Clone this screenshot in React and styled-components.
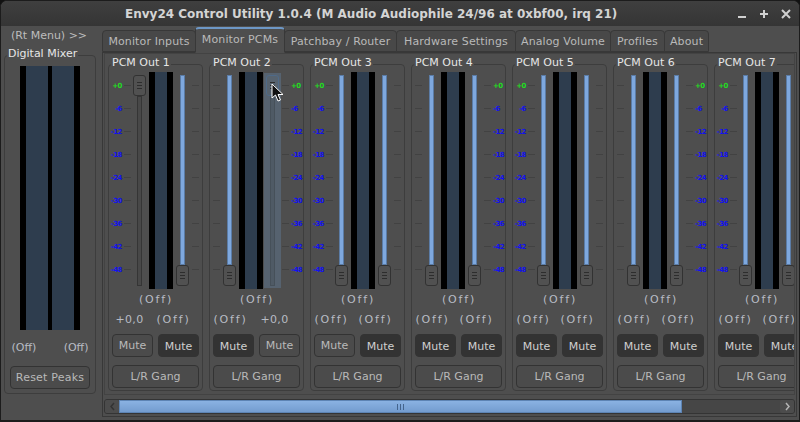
import styled, { createGlobalStyle } from "styled-components";

const Global = createGlobalStyle`
  html, body { margin: 0; padding: 0; background: #111; }
  body { width: 800px; height: 422px; overflow: hidden; font-family: "DejaVu Sans", sans-serif; }
`;

const Window = styled.div`
  position: relative;
  width: 800px;
  height: 422px;
  box-sizing: border-box;
  background: #4e4e4e;
  border: 1px solid #1c1c1c;
  border-bottom-width: 2px;
  border-radius: 7px 7px 0 0;
  overflow: hidden;
  color: #c4c4c4;
  font-size: 11px;
  display: flex;
  flex-direction: column;
`;

const TitleBar = styled.div`
  height: 25px;
  flex: none;
  background: linear-gradient(#3f3f3f, #353535);
  display: flex;
  align-items: center;
  padding: 0 7px 0 124px;
`;
const Title = styled.div`
  font-size: 12px;
  font-weight: 700;
  color: #d4d4d4;
  white-space: nowrap;
`;
const WinButtons = styled.div`
  display: flex;
  gap: 10px;
  margin-left: auto;
  svg { display: block; }
`;

const Body = styled.div`
  flex: 1;
  min-height: 0;
  display: flex;
  gap: 6px;
  padding: 2px 2px 0 3px;
`;

const Side = styled.div`
  width: 92px;
  flex: none;
  display: flex;
  flex-direction: column;
`;
const RtMenu = styled.div`
  text-align: center;
  height: 14px;
  line-height: 14px;
  margin-top: 1px;
  padding-right: 2px;
  color: #bdbdbd;
`;
const SideFrame = styled.div`
  position: relative;
  margin-top: 12px;
  height: 339px;
  box-sizing: border-box;
  border: 1px solid #3d3d3d;
  border-radius: 4px;
  display: flex;
  flex-direction: column;
  align-items: center;
  padding-top: 10px;
`;
const FrameLabel = styled.span`
  position: absolute;
  left: 2px;
  top: -9px;
  padding: 0 1px;
  background: #4e4e4e;
  color: #e6e6e6;
  line-height: 14px;
  white-space: nowrap;
`;
const BigMeter = styled.div`
  width: 60px;
  height: 264px;
  flex: none;
  background: #000;
  display: flex;
  justify-content: center;
  gap: 4px;
`;
const MeterBar = styled.div`
  width: ${(p) => p.$w}px;
  height: 100%;
  background: #2e3d4e;
`;
const PeakRow = styled.div`
  width: 77px;
  display: flex;
  justify-content: space-between;
  margin-top: 11px;
  line-height: 14px;
  color: #b8bcc4;
`;
const Button = styled.div`
  box-sizing: border-box;
  width: ${(p) => p.$w}px;
  height: 23px;
  flex: none;
  display: flex;
  align-items: center;
  justify-content: center;
  border: 1px solid #333333;
  border-radius: 4px;
  background: ${(p) => (p.$on ? "#333333" : "#4b4b4b")};
  color: ${(p) => (p.$on ? "#cfcfcf" : "#b9b9b9")};
  padding-top: ${(p) => (p.$on ? 2 : 0)}px;
`;
const ResetButton = styled(Button)`
  margin-top: 11px;
  letter-spacing: 0.2px;
`;

const Main = styled.div`
  flex: 1;
  min-width: 0;
  display: flex;
  flex-direction: column;
`;
const Tabs = styled.div`
  height: 24px;
  flex: none;
  padding-left: 1px;
  display: flex;
  align-items: flex-end;
`;
const Tab = styled.div`
  box-sizing: border-box;
  width: ${(p) => p.$w}px;
  flex: none;
  height: ${(p) => (p.$active ? 26 : 22)}px;
  margin-bottom: ${(p) => (p.$active ? -1 : 0)}px;
  position: relative;
  z-index: ${(p) => (p.$active ? 2 : 0)};
  display: flex;
  align-items: center;
  justify-content: center;
  padding-bottom: ${(p) => (p.$active ? 3 : 0)}px;
  border: 1px solid #383838;
  border-top-color: ${(p) => (p.$active ? "#6d97c6" : "#383838")};
  border-top-width: ${(p) => (p.$active ? 2 : 1)}px;
  border-bottom-color: ${(p) => (p.$active ? "#4e4e4e" : "#383838")};
  border-radius: 4px 4px 0 0;
  margin-left: -1px;
  background: ${(p) => (p.$active ? "#4e4e4e" : "#484848")};
  color: #b9b9b9;
  white-space: nowrap;
  letter-spacing: 0.12px;
`;
const Panel = styled.div`
  box-sizing: border-box;
  height: 365px;
  flex: none;
  border: 1px solid #383838;
  padding: 0 1px 2px 1px;
  display: flex;
  flex-direction: column;
`;
const Viewport = styled.div`
  box-sizing: border-box;
  height: 342px;
  flex: none;
  border: 1px solid #434343;
  padding: 10px 0 0 3px;
  overflow: hidden;
  display: flex;
  gap: 6px;
`;

const Strip = styled.div`
  position: relative;
  box-sizing: border-box;
  width: 95px;
  height: 327px;
  flex: none;
  border: 1px solid #3d3d3d;
  border-radius: 4px;
  padding: 7px 3px 0 3px;
  display: flex;
  flex-direction: column;
  align-items: center;
`;
const Controls = styled.div`
  width: 100%;
  height: 218px;
  flex: none;
  display: flex;
`;
const Scale = styled.div`
  width: 19px;
  flex: none;
  padding-top: 2px;
  display: flex;
  flex-direction: column;
`;
const ScaleRow = styled.div`
  height: 23px;
  flex: none;
  display: flex;
  align-items: center;
  justify-content: ${(p) => (p.$flip ? "flex-start" : "flex-end")};
  padding-left: ${(p) => (p.$flip ? 1 : 0)}px;
  gap: 2px;
  font-size: 7px;
  font-weight: 700;
  letter-spacing: -0.5px;
  color: ${(p) => (p.$top ? "#22dd22" : "#1212ee")};
`;
const ScaleText = styled.span`
  line-height: 10px;
`;
const Tick = styled.i`
  width: 7px;
  height: 1px;
  flex: none;
  background: #424242;
`;
const TickCol = styled.div`
  width: 8px;
  flex: none;
  padding-top: 2px;
  display: flex;
  flex-direction: column;
  align-items: ${(p) => (p.$flip ? "flex-end" : "flex-start")};
`;
const TickRow = styled.div`
  height: 23px;
  flex: none;
  display: flex;
  align-items: center;
`;
const FaderCol = styled.div`
  position: relative;
  width: 17px;
  height: 215px;
  margin-top: 1px;
  flex: none;
  background: ${(p) => (p.$hover ? "#56626f" : "transparent")};
`;
const Track = styled.div`
  position: absolute;
  left: 6px;
  width: 5px;
  top: 23px;
  bottom: 2px;
  box-sizing: border-box;
  border: 1px solid ${(p) => (p.$hover ? "#465059" : "#353535")};
  background: ${(p) => (p.$hover ? "#4f5a65" : "#484848")};
`;
const Fill = styled.div`
  position: absolute;
  left: 6px;
  width: 5px;
  top: 2px;
  bottom: 23px;
  box-sizing: border-box;
  border: 1px solid #5b7ca6;
  background: #7ea8de;
`;
const Thumb = styled.div`
  position: absolute;
  left: 2px;
  width: 13px;
  height: 21px;
  box-sizing: border-box;
  ${(p) => (p.$up ? "top: 2px;" : "bottom: 2px;")}
  border: 1px solid ${(p) => (p.$hover ? "#4f6a88" : "#323232")};
  border-radius: 3px;
  background: ${(p) => (p.$hover ? "#57636f" : "#515151")};
  display: flex;
  flex-direction: column;
  align-items: center;
  justify-content: center;
  gap: 2px;
  i {
    display: block;
    width: 5px;
    height: 1px;
    background: #2d2d2d;
  }
`;
const StripMeter = styled.div`
  width: 24px;
  height: 217px;
  flex: none;
  margin: 0 1px;
  display: flex;
  justify-content: center;
  background: #000;
`;
const Gain = styled.div`
  height: 20px;
  line-height: 20px;
  padding-left: 1px;
  letter-spacing: 1.800px;
  color: #b8bcc4;
`;
const ValueRow = styled.div`
  width: 87px;
  height: 20px;
  display: flex;
  gap: 9px;
  line-height: 20px;
  color: #b8bcc4;
`;
const Value = styled.div`
  width: 35px;
  text-align: center;
  flex: none;
  white-space: nowrap;
  display: flex;
  justify-content: center;
  letter-spacing: ${(p) => (p.$num ? 0.3 : 1.8)}px;
`;
const MuteRow = styled.div`
  width: 87px;
  display: flex;
  justify-content: space-between;
  margin-top: 4px;
`;
const GangButton = styled(Button)`
  margin-top: 8px;
`;

const ScrollBar = styled.div`
  box-sizing: border-box;
  height: 15px;
  flex: none;
  margin-top: 4px;
  border: 1px solid #343434;
  border-radius: 3px;
  background: #464646;
  display: flex;
  align-items: stretch;
`;
const ScrollEnd = styled.div`
  width: 14px;
  flex: none;
  display: flex;
  align-items: center;
  justify-content: center;
  background: #4c4c4c;
  border-radius: 2px;
  margin-left: ${(p) => (p.$right ? "auto" : 0)};
  svg { display: block; }
`;
const ScrollThumb = styled.div`
  width: 563px;
  flex: none;
  box-sizing: border-box;
  border: 1px solid #5d84b4;
  background: linear-gradient(#8ab2e2, #739ccf);
  display: flex;
  align-items: center;
  justify-content: center;
  gap: 2px;
  i {
    display: block;
    width: 1px;
    height: 6px;
    background: #44648c;
  }
`;
const Cursor = styled.svg`
  position: absolute;
  left: 270px;
  top: 82px;
`;

const labels = ["+0", "-6", "-12", "-18", "-24", "-30", "-36", "-42", "-48"];

const strips = [
  { name: "PCM Out 1", a: "+0,0", b: "(Off)", upA: true, muteA: false, muteB: true },
  { name: "PCM Out 2", a: "(Off)", b: "+0,0", upB: true, muteA: true, muteB: false },
  { name: "PCM Out 3", a: "(Off)", b: "(Off)", muteA: false, muteB: true },
  { name: "PCM Out 4", a: "(Off)", b: "(Off)", muteA: true, muteB: true },
  { name: "PCM Out 5", a: "(Off)", b: "(Off)", muteA: true, muteB: true },
  { name: "PCM Out 6", a: "(Off)", b: "(Off)", muteA: true, muteB: true },
  { name: "PCM Out 7", a: "(Off)", b: "(Off)", muteA: true, muteB: true },
];

const tabs = [
  { name: "Monitor Inputs", w: 94 },
  { name: "Monitor PCMs", w: 90 },
  { name: "Patchbay / Router", w: 113 },
  { name: "Hardware Settings", w: 120 },
  { name: "Analog Volume", w: 96 },
  { name: "Profiles", w: 55 },
  { name: "About", w: 45 },
];

const Fader = ({ up, hover }) => (
  <FaderCol $hover={hover}>
    {up ? <Track $hover={hover} /> : <Fill />}
    <Thumb $up={up} $hover={hover}>
      <i />
      <i />
      <i />
    </Thumb>
  </FaderCol>
);

const Ticks = ({ flip }) => (
  <TickCol $flip={flip}>
    {labels.map((l) => (
      <TickRow key={l}>
        <Tick />
      </TickRow>
    ))}
  </TickCol>
);

const LabelScale = ({ flip }) => (
  <Scale>
    {labels.map((l, i) => (
      <ScaleRow key={l} $top={i === 0} $flip={flip}>
        {flip ? <Tick /> : null}
        <ScaleText>{l}</ScaleText>
        {flip ? null : <Tick />}
      </ScaleRow>
    ))}
  </Scale>
);

const StripView = ({ data, even }) => (
  <Strip>
    <FrameLabel>{data.name}</FrameLabel>
    <Controls>
      {even ? <Ticks /> : <LabelScale />}
      <Fader up={data.upA} />
      <StripMeter>
        <MeterBar $w={12} />
      </StripMeter>
      <Fader up={data.upB} hover={data.upB} />
      {even ? <LabelScale flip /> : <Ticks flip />}
    </Controls>
    <Gain>(Off)</Gain>
    <ValueRow>
      <Value $num={data.a !== "(Off)"}>{data.a}</Value>
      <Value $num={data.b !== "(Off)"}>{data.b}</Value>
    </ValueRow>
    <MuteRow>
      <Button $w={41} $on={data.muteA}>Mute</Button>
      <Button $w={41} $on={data.muteB}>Mute</Button>
    </MuteRow>
    <GangButton $w={87}>L/R Gang</GangButton>
  </Strip>
);

export default function App() {
  return (
    <Window>
      <Global />
      <TitleBar>
        <Title>Envy24 Control Utility 1.0.4 (M Audio Audiophile 24/96 at 0xbf00, irq 21)</Title>
        <WinButtons>
          <svg width="12" height="12" viewBox="0 0 12 12">
            <path d="M2 9h8" stroke="#d0d0d0" strokeWidth="2" />
          </svg>
          <svg width="12" height="12" viewBox="0 0 12 12">
            <path d="M2 6h8M6 2v8" stroke="#d0d0d0" strokeWidth="2" />
          </svg>
          <svg width="12" height="12" viewBox="0 0 12 12">
            <path d="M2 2l8 8M10 2l-8 8" stroke="#d0d0d0" strokeWidth="2" />
          </svg>
        </WinButtons>
      </TitleBar>
      <Body>
        <Side>
          <RtMenu>(Rt Menu) &gt;&gt;</RtMenu>
          <SideFrame>
            <FrameLabel>Digital Mixer</FrameLabel>
            <BigMeter>
              <MeterBar $w={22} />
              <MeterBar $w={22} />
            </BigMeter>
            <PeakRow>
              <span>(Off)</span>
              <span>(Off)</span>
            </PeakRow>
            <ResetButton $w={80}>Reset Peaks</ResetButton>
          </SideFrame>
        </Side>
        <Main>
          <Tabs>
            {tabs.map((t, i) => (
              <Tab key={t.name} $w={t.w} $active={i === 1}>{t.name}</Tab>
            ))}
          </Tabs>
          <Panel>
            <Viewport>
              {strips.map((s, i) => (
                <StripView key={s.name} data={s} even={i % 2 === 1} />
              ))}
            </Viewport>
            <ScrollBar>
              <ScrollEnd>
                <svg width="7" height="9" viewBox="0 0 7 9">
                  <path d="M5 1L2 4.500L5 8" stroke="#333333" strokeWidth="1.500" fill="none" />
                </svg>
              </ScrollEnd>
              <ScrollThumb>
                <i />
                <i />
                <i />
              </ScrollThumb>
              <ScrollEnd $right>
                <svg width="7" height="9" viewBox="0 0 7 9">
                  <path d="M2 1l3 3.500L2 8" stroke="#b5b5b5" strokeWidth="1.500" fill="none" />
                </svg>
              </ScrollEnd>
            </ScrollBar>
          </Panel>
        </Main>
      </Body>
      <Cursor width="14" height="20" viewBox="0 0 14 20">
        <path d="M1 1v14l3.500-3 2.500 6 2.500-1-2.500-5.500h5z" fill="#111" stroke="#fff" strokeWidth="1" />
      </Cursor>
    </Window>
  );
}
